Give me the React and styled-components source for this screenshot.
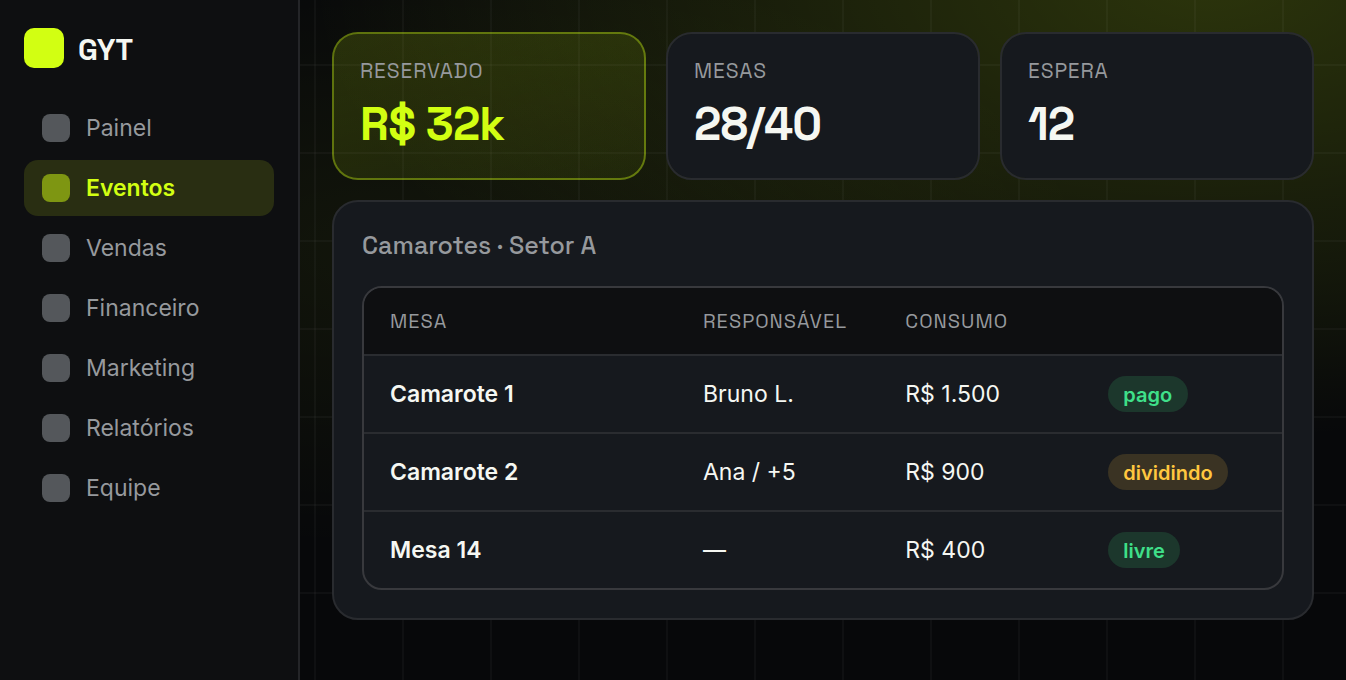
import { useState } from "react";
import styled, { createGlobalStyle } from "styled-components";

const display = `"Space Grotesk", Inter, "Liberation Sans", sans-serif`;
const lime = "#d2ff12";
const text = "#f5f7f2";
const muted = "#96999d";

const GlobalStyle = createGlobalStyle`
  * {
    box-sizing: border-box;
  }
  body {
    margin: 0;
    overflow: hidden;
    background: #08090b;
    color: ${text};
    font-family: Inter, "Liberation Sans", sans-serif;
    -webkit-font-smoothing: antialiased;
  }
`;

const Layout = styled.div`
  display: flex;
  width: 100%;
  height: 100vh;
`;

const Sidebar = styled.aside`
  width: 300px;
  flex-shrink: 0;
  padding: 28px 24px;
  background: #0e0f11;
  border-right: 2px solid #242528;
`;

const Brand = styled.div`
  display: flex;
  align-items: center;
  gap: 14px;
  height: 40px;
  margin-bottom: 32px;
`;

const BrandMark = styled.span`
  width: 40px;
  height: 40px;
  border-radius: 10px;
  background: ${lime};
`;

const BrandName = styled.span`
  padding-top: 3px;
  font-family: ${display};
  font-size: 30px;
  font-weight: 700;
`;

const Nav = styled.nav`
  display: flex;
  flex-direction: column;
  gap: 4px;
`;

const NavItem = styled.button`
  display: flex;
  align-items: center;
  gap: 16px;
  width: 250px;
  height: 56px;
  padding: 0 18px;
  border: none;
  border-radius: 14px;
  background: ${(p) => (p.$active ? "#292e12" : "transparent")};
  color: ${(p) => (p.$active ? lime : muted)};
  font-family: inherit;
  font-size: 23px;
  font-weight: ${(p) => (p.$active ? 600 : 400)};
  text-align: left;
  cursor: pointer;
`;

const NavIcon = styled.span`
  width: 28px;
  height: 28px;
  border-radius: 8px;
  background: ${(p) => (p.$active ? "#7e9612" : "#54575b")};
`;

const Main = styled.main`
  flex: 1;
  display: flex;
  flex-direction: column;
  gap: 20px;
  padding: 32px;
  background-color: #07080a;
  background-image:
    linear-gradient(rgba(255, 255, 255, 0.032) 2px, transparent 2px),
    linear-gradient(90deg, rgba(255, 255, 255, 0.032) 2px, transparent 2px),
    radial-gradient(900px 460px at 910px -20px, rgba(210, 255, 18, 0.18), transparent 100%),
    radial-gradient(700px 300px at 100px 250px, rgba(210, 255, 18, 0.055), transparent 100%);
  background-size: 88px 88px, 88px 88px, 100% 100%, 100% 100%;
  background-position: 14px 64px, 14px 64px, 0 0, 0 0;
`;

const Stats = styled.section`
  display: grid;
  grid-template-columns: repeat(3, 1fr);
  gap: 20px;
`;

const StatCard = styled.div`
  height: 148px;
  padding: 25px 26px;
  border: 2px solid ${(p) => (p.$highlight ? "rgba(210, 255, 18, 0.42)" : "#292b2f")};
  border-radius: 26px;
  background: ${(p) =>
    p.$highlight
      ? "linear-gradient(160deg, rgba(210, 255, 18, 0.15), rgba(210, 255, 18, 0.06))"
      : "#16191e"};
  background-clip: padding-box;
`;

const StatLabel = styled.div`
  line-height: 24px;
  font-family: ${display};
  font-size: 21px;
  letter-spacing: 0.84px;
  text-transform: uppercase;
  color: ${muted};
`;

const StatValue = styled.div`
  margin-top: 13px;
  line-height: 56px;
  font-family: ${display};
  font-size: 46px;
  font-weight: 700;
  letter-spacing: -0.92px;
  color: ${(p) => (p.$highlight ? lime : text)};
`;

const Panel = styled.section`
  height: 420px;
  padding: 28px;
  border: 2px solid #292b2f;
  border-radius: 26px;
  background: #16191e;
`;

const PanelTitle = styled.h2`
  margin: 0 0 25px;
  line-height: 31px;
  font-family: ${display};
  font-size: 25px;
  font-weight: 500;
  color: ${muted};
`;

const Table = styled.div`
  border: 2px solid #38393d;
  border-radius: 20px;
  overflow: hidden;
`;

const Row = styled.div`
  display: grid;
  grid-template-columns: 313px 202.3px 202.5px 1fr;
  align-items: center;
  height: 78px;
  border-bottom: 2px solid #2a2c30;
  font-size: 23px;

  &:last-child {
    height: 76px;
    border-bottom: none;
  }
`;

const HeadRow = styled(Row)`
  height: 68px;
  background: #0e0f11;
  font-family: ${display};
  font-size: 20px;
  letter-spacing: 1px;
  text-transform: uppercase;
  color: ${muted};
`;

const Cell = styled.div`
  padding-left: 26px;
  font-weight: ${(p) => (p.$strong ? 600 : 400)};
`;

const tones = {
  green: { color: "#3fe08a", background: "#1c372c" },
  amber: { color: "#ffc73f", background: "#3a3323" },
};

const Badge = styled.span`
  display: block;
  width: fit-content;
  height: 36px;
  padding: 1px 15.5px 0;
  border-radius: 18px;
  line-height: 36px;
  font-size: 20px;
  font-weight: 600;
  color: ${(p) => tones[p.$tone].color};
  background: ${(p) => tones[p.$tone].background};
`;

const menu = ["Painel", "Eventos", "Vendas", "Financeiro", "Marketing", "Relatórios", "Equipe"];

const stats = [
  { label: "Reservado", value: "R$ 32k", highlight: true },
  { label: "Mesas", value: "28/40" },
  { label: "Espera", value: "12" },
];

const tables = [
  { mesa: "Camarote 1", responsavel: "Bruno L.", consumo: "R$ 1.500", status: "pago", tone: "green" },
  { mesa: "Camarote 2", responsavel: "Ana / +5", consumo: "R$ 900", status: "dividindo", tone: "amber" },
  { mesa: "Mesa 14", responsavel: "—", consumo: "R$ 400", status: "livre", tone: "green" },
];

const App = () => {
  const [current, setCurrent] = useState("Eventos");

  return (
    <>
      <GlobalStyle />
      <Layout>
        <Sidebar>
          <Brand>
            <BrandMark />
            <BrandName>GYT</BrandName>
          </Brand>
          <Nav>
            {menu.map((item) => (
              <NavItem key={item} $active={item === current} onClick={() => setCurrent(item)}>
                <NavIcon $active={item === current} />
                {item}
              </NavItem>
            ))}
          </Nav>
        </Sidebar>
        <Main>
          <Stats>
            {stats.map((s) => (
              <StatCard key={s.label} $highlight={s.highlight}>
                <StatLabel>{s.label}</StatLabel>
                <StatValue $highlight={s.highlight}>{s.value}</StatValue>
              </StatCard>
            ))}
          </Stats>
          <Panel>
            <PanelTitle>Camarotes · Setor A</PanelTitle>
            <Table>
              <HeadRow>
                <Cell>Mesa</Cell>
                <Cell>Responsável</Cell>
                <Cell>Consumo</Cell>
                <Cell />
              </HeadRow>
              {tables.map((t) => (
                <Row key={t.mesa}>
                  <Cell $strong>{t.mesa}</Cell>
                  <Cell>{t.responsavel}</Cell>
                  <Cell>{t.consumo}</Cell>
                  <Cell>
                    <Badge $tone={t.tone}>{t.status}</Badge>
                  </Cell>
                </Row>
              ))}
            </Table>
          </Panel>
        </Main>
      </Layout>
    </>
  );
};

export default App;
